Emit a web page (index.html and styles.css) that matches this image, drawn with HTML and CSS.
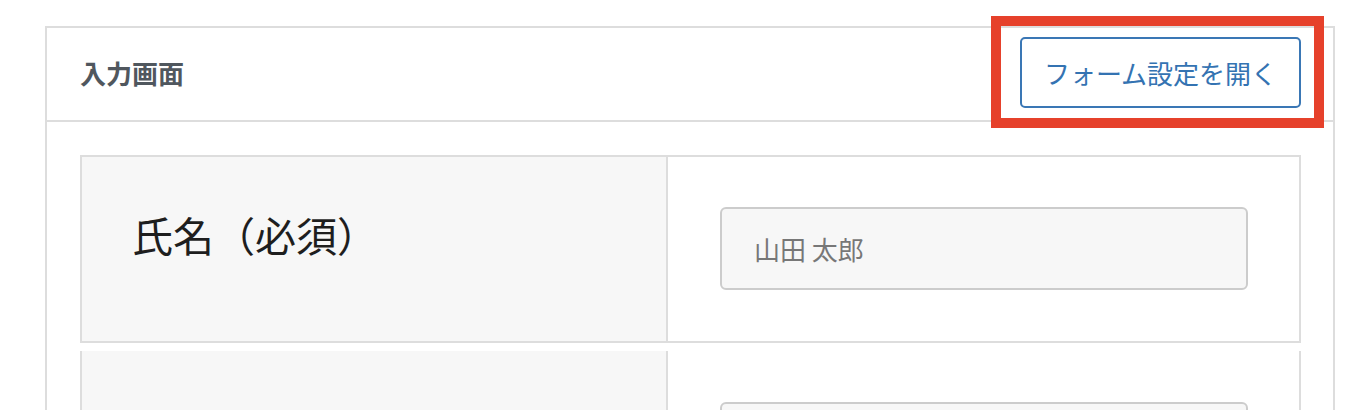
FILE: index.html
```html
<!DOCTYPE html>
<html lang="ja">
<head>
<meta charset="utf-8">
<title>入力画面</title>
<link rel="stylesheet" href="styles.css">
</head>
<body>
<div class="panel">
  <div class="panel-header">
    <h2 class="panel-title">入力画面</h2>
    <div class="btn-wrap">
      <button class="btn-outline" type="button">フォーム設定を開く</button>
      <span class="highlight"></span>
    </div>
  </div>
  <div class="panel-body">
    <div class="form-row">
      <div class="form-label">氏名（必須）</div>
      <div class="form-field"><input class="text-input" type="text" placeholder="山田 太郎"></div>
    </div>
    <div class="form-row form-row-next">
      <div class="form-label"></div>
      <div class="form-field"><input class="text-input" type="text"></div>
    </div>
  </div>
</div>
</body>
</html>
```

FILE: styles.css
```css
html, body {
  margin: 0;
  padding: 0;
  background: #fff;
  overflow: hidden;
}
body {
  font-family: "Noto Sans CJK JP", "Noto Sans", sans-serif;
  padding: 26px 0 0 45px;
}
.panel {
  width: 1286px;
  border: 2px solid #dddddd;
  border-bottom: none;
  background: #fff;
}
.panel-header {
  display: flex;
  justify-content: space-between;
  align-items: center;
  height: 71px;
  padding: 9px 32px 12px 33px;
  border-bottom: 2px solid #dddddd;
}
.panel-title {
  margin: 0;
  font-size: 26px;
  font-weight: 700;
  color: #50575e;
  line-height: 1;
}
.btn-wrap {
  position: relative;
  display: flex;
}
.btn-outline {
  width: 281px;
  height: 71px;
  box-sizing: border-box;
  border: 2px solid #3a77b5;
  border-radius: 5px;
  background: #fff;
  color: #3473b2;
  font-family: "Noto Sans CJK JP", "Noto Sans", sans-serif;
  font-size: 26px;
  padding: 0;
  text-align: center;
}
.highlight {
  position: absolute;
  left: -29px;
  top: -21px;
  width: 313px;
  height: 92px;
  border: 10px solid #e6412b;
  pointer-events: none;
}
.panel-body {
  padding: 33px 32px 0 33px;
}
.form-row {
  display: grid;
  grid-template-columns: 586px 1fr;
  border: 2px solid #dddddd;
}
.form-row-next {
  margin-top: 8px;
  border-top: none;
}
.form-label {
  background: #f7f7f7;
  border-right: 2px solid #dddddd;
  padding: 47px 50px 0 50px;
  font-size: 41px;
  line-height: 60px;
  color: #1e1e1e;
}
.form-field {
  padding: 50px 51px 51px 52px;
}
.form-row-next .form-field {
  padding-top: 51px;
}
.text-input {
  display: block;
  width: 100%;
  height: 83px;
  box-sizing: border-box;
  border: 2px solid #cccccc;
  border-radius: 6px;
  background: #f7f7f7;
  padding: 0 32px;
  font-family: "Noto Sans CJK JP", "Noto Sans", sans-serif;
  font-size: 26px;
  color: #333;
  outline: none;
}
.text-input::placeholder {
  color: #777777;
  opacity: 1;
}
```
